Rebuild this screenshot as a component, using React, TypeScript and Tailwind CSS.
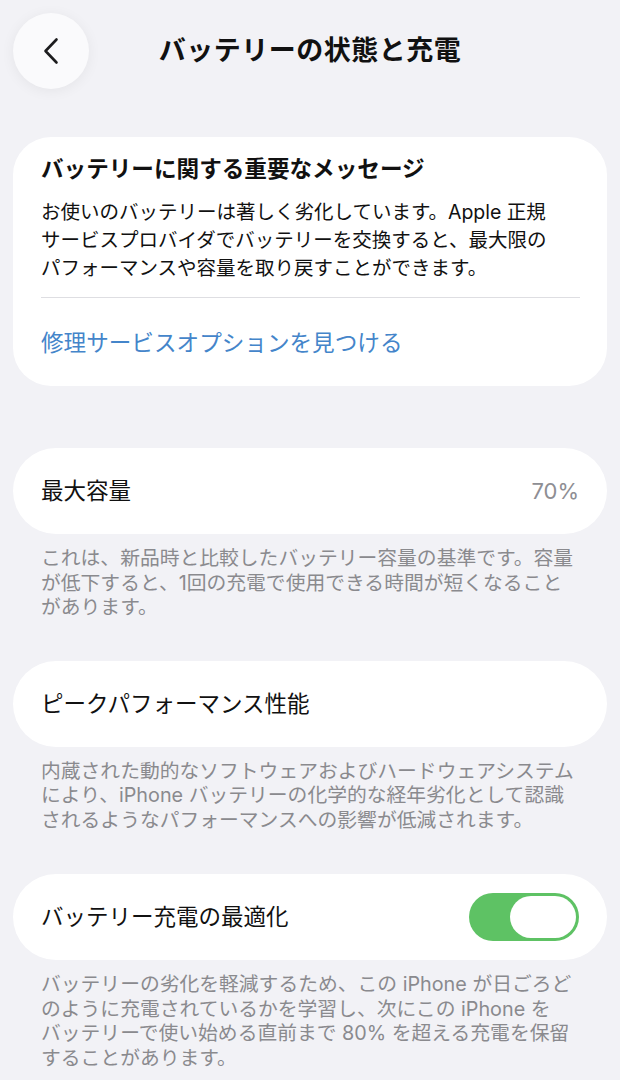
import React from "react";

const font = { fontFamily: '"Inter", "Noto Sans CJK JP", sans-serif' };

function Caption({ lines }: { lines: string[] }) {
    return (
        <p className="mt-[12px] px-[41px] text-[19.8px] leading-[24.5px] text-[#8a8a8e] whitespace-nowrap">
            {lines.map((l, i) => (
                <span key={i} className="block">{l}</span>
            ))}
        </p>
    );
}

function Row({ children }: { children: React.ReactNode }) {
    return (
        <div className="mx-[13px] h-[86px] rounded-[43px] bg-white flex items-center justify-between pl-[28px] pr-[28px]">
            {children}
        </div>
    );
}

export default function App() {
    return (
        <div className="min-h-[1080px] w-[620px] bg-[#f2f2f6] text-[#111] antialiased" style={font}>
            {/* Header */}
            <header className="flex items-start h-[137px] pt-[13px]">
                <button className="ml-[13px] w-[76px] h-[76px] rounded-full bg-[#fafafc] shadow-[0_2px_14px_rgba(0,0,0,0.06)] flex items-center justify-center shrink-0">
                    <svg width="18" height="28" viewBox="0 0 18 28" fill="none">
                        <path d="M14.5 2.5 L3.5 14 L14.5 25.5" stroke="#1c1c1e" strokeWidth="2.6" strokeLinecap="round" strokeLinejoin="round" />
                    </svg>
                </button>
                <h1 className="flex-1 text-center text-[27px] leading-[76px] font-bold tracking-[0.5px]">バッテリーの状態と充電</h1>
                <div className="w-[89px] shrink-0" />
            </header>

            {/* Important message */}
            <section className="mx-[13px] rounded-[38px] bg-white px-[28px] pt-[17px] pb-[28px]">
                <h2 className="text-[22.6px] leading-[30px] font-bold">バッテリーに関する重要なメッセージ</h2>
                <p className="mt-[14px] text-[19.5px] leading-[28px] whitespace-nowrap">
                    <span className="block">お使いのバッテリーは著しく劣化しています。Apple 正規</span>
                    <span className="block">サービスプロバイダでバッテリーを交換すると、最大限の</span>
                    <span className="block">パフォーマンスや容量を取り戻すことができます。</span>
                </p>
                <div className="mt-[15px] h-px bg-[#dedee2] mr-[-1px]" />
                <div className="mt-[30px] text-[22.6px] leading-[30px] text-[#4485ca]">修理サービスオプションを見つける</div>
            </section>

            <div className="h-[62px]" />

            <Row>
                <span className="text-[22.5px]">最大容量</span>
                <span className="text-[22px] text-[#8e8e93]">70%</span>
            </Row>
            <Caption
                lines={[
                    "これは、新品時と比較したバッテリー容量の基準です。容量",
                    "が低下すると、1回の充電で使用できる時間が短くなること",
                    "があります。",
                ]}
            />

            <div className="h-[41px]" />

            <Row>
                <span className="text-[22.5px]">ピークパフォーマンス性能</span>
            </Row>
            <Caption
                lines={[
                    "内蔵された動的なソフトウェアおよびハードウェアシステム",
                    "により、iPhone バッテリーの化学的な経年劣化として認識",
                    "されるようなパフォーマンスへの影響が低減されます。",
                ]}
            />

            <div className="h-[42px]" />

            <Row>
                <span className="text-[22.5px]">バッテリー充電の最適化</span>
                {/* toggle, on */}
                <div className="w-[110px] h-[48px] rounded-full bg-[#5ec264] p-[3px] flex justify-end">
                    <div className="w-[66px] h-full rounded-full bg-white" />
                </div>
            </Row>
            <Caption
                lines={[
                    "バッテリーの劣化を軽減するため、この iPhone が日ごろど",
                    "のように充電されているかを学習し、次にこの iPhone を",
                    "バッテリーで使い始める直前まで 80% を超える充電を保留",
                    "することがあります。",
                ]}
            />
        </div>
    );
}
